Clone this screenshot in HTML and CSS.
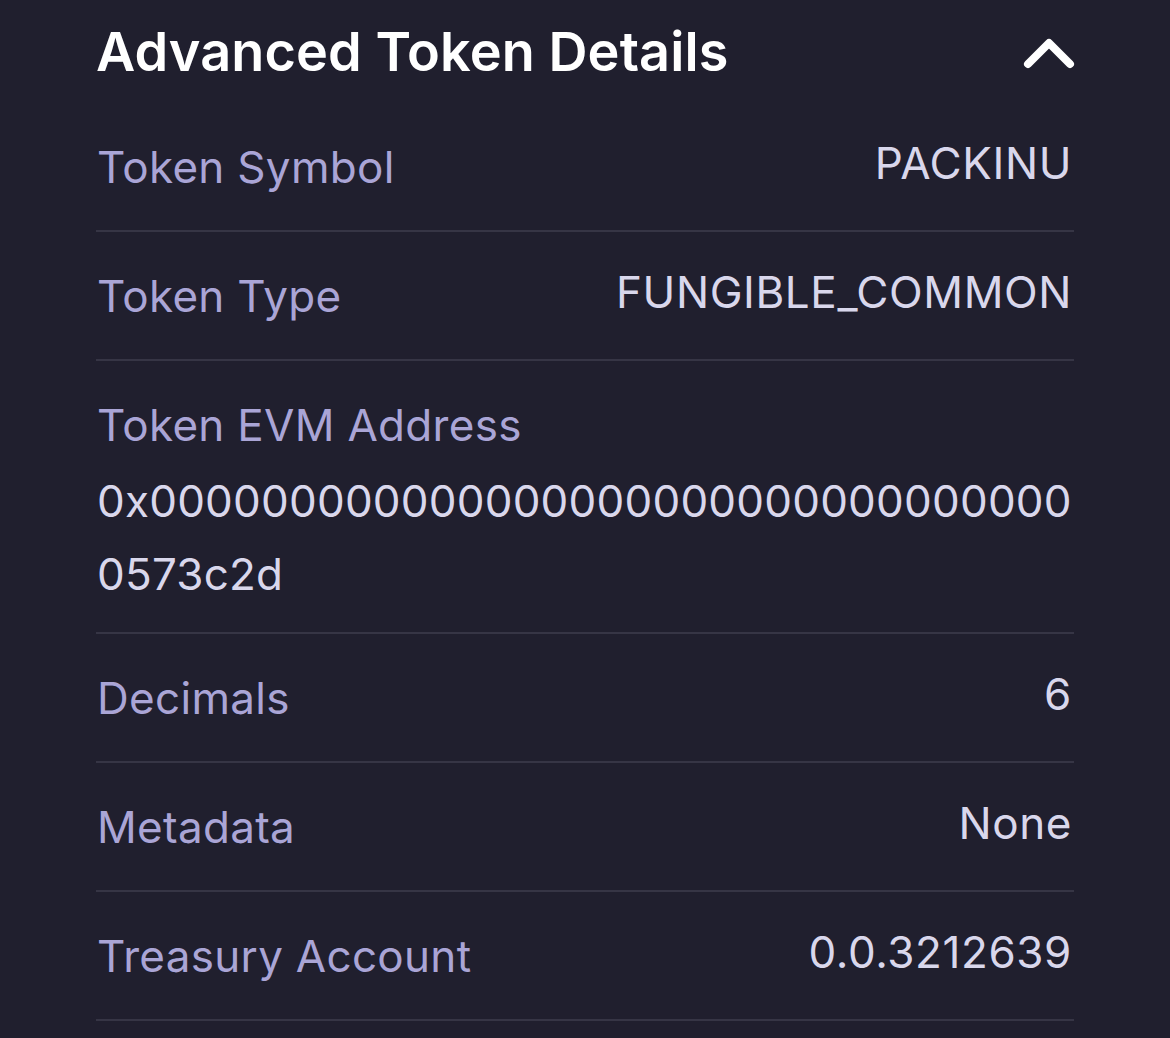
FILE: index.html
```html
<!DOCTYPE html>
<html lang="en">
<head>
    <meta charset="UTF-8">
    <meta name="viewport" content="width=device-width, initial-scale=1.0">
    <title>Advanced Token Details</title>
    <link rel="stylesheet" href="styles.css">
</head>
<body>
    <div class="details">
        <div class="details-header">
            <h2>Advanced Token Details</h2>
            <svg class="chevron" width="52" height="34" viewBox="0 0 52 34">
                <path d="M5 29 L26 8 L47 29" fill="none" stroke="#fff" stroke-width="8" stroke-linecap="round" stroke-linejoin="round"/>
            </svg>
        </div>
        <div class="row">
            <span class="label">Token Symbol</span>
            <span class="value">PACKINU</span>
        </div>
        <div class="row">
            <span class="label">Token Type</span>
            <span class="value">FUNGIBLE_COMMON</span>
        </div>
        <div class="row stacked">
            <span class="label">Token EVM Address</span>
            <span class="value address">0x0000000000000000000000000000000000573c2d</span>
        </div>
        <div class="row">
            <span class="label">Decimals</span>
            <span class="value">6</span>
        </div>
        <div class="row">
            <span class="label">Metadata</span>
            <span class="value">None</span>
        </div>
        <div class="row">
            <span class="label">Treasury Account</span>
            <span class="value">0.0.3212639</span>
        </div>
    </div>
</body>
</html>
```

FILE: styles.css
```css
body {
    margin: 0;
    background-color: #201f2e;
    font-family: Inter, "Noto Sans", sans-serif;
}
.details {
    width: 978px;
    margin-left: 96px;
}
.details-header {
    display: flex;
    justify-content: space-between;
    align-items: center;
    height: 103px;
}
.details-header h2 {
    margin: 0;
    color: #ffffff;
    font-size: 54px;
    font-weight: 600;
    letter-spacing: 0.1px;
}
.chevron {
    margin-right: -1px;
}
.row {
    display: flex;
    justify-content: space-between;
    align-items: center;
    padding: 30px 2px 29px 1px;
    border-bottom: 2px solid #363545;
    line-height: 68px;
}
.row:first-of-type {
    padding-top: 0;
}
.stacked {
    flex-direction: column;
    align-items: flex-start;
    padding-bottom: 21px;
}
.label {
    color: #aaa5d6;
    font-size: 44px;
    letter-spacing: 0.3px;
}
.value {
    color: #d9d7ec;
    font-size: 44px;
    letter-spacing: 0.6px;
    line-height: 52px;
    padding-bottom: 8px;
}
.address {
    margin-top: 6px;
    padding-bottom: 0;
    line-height: 73px;
    letter-spacing: 0.2px;
    word-break: break-all;
}
```
